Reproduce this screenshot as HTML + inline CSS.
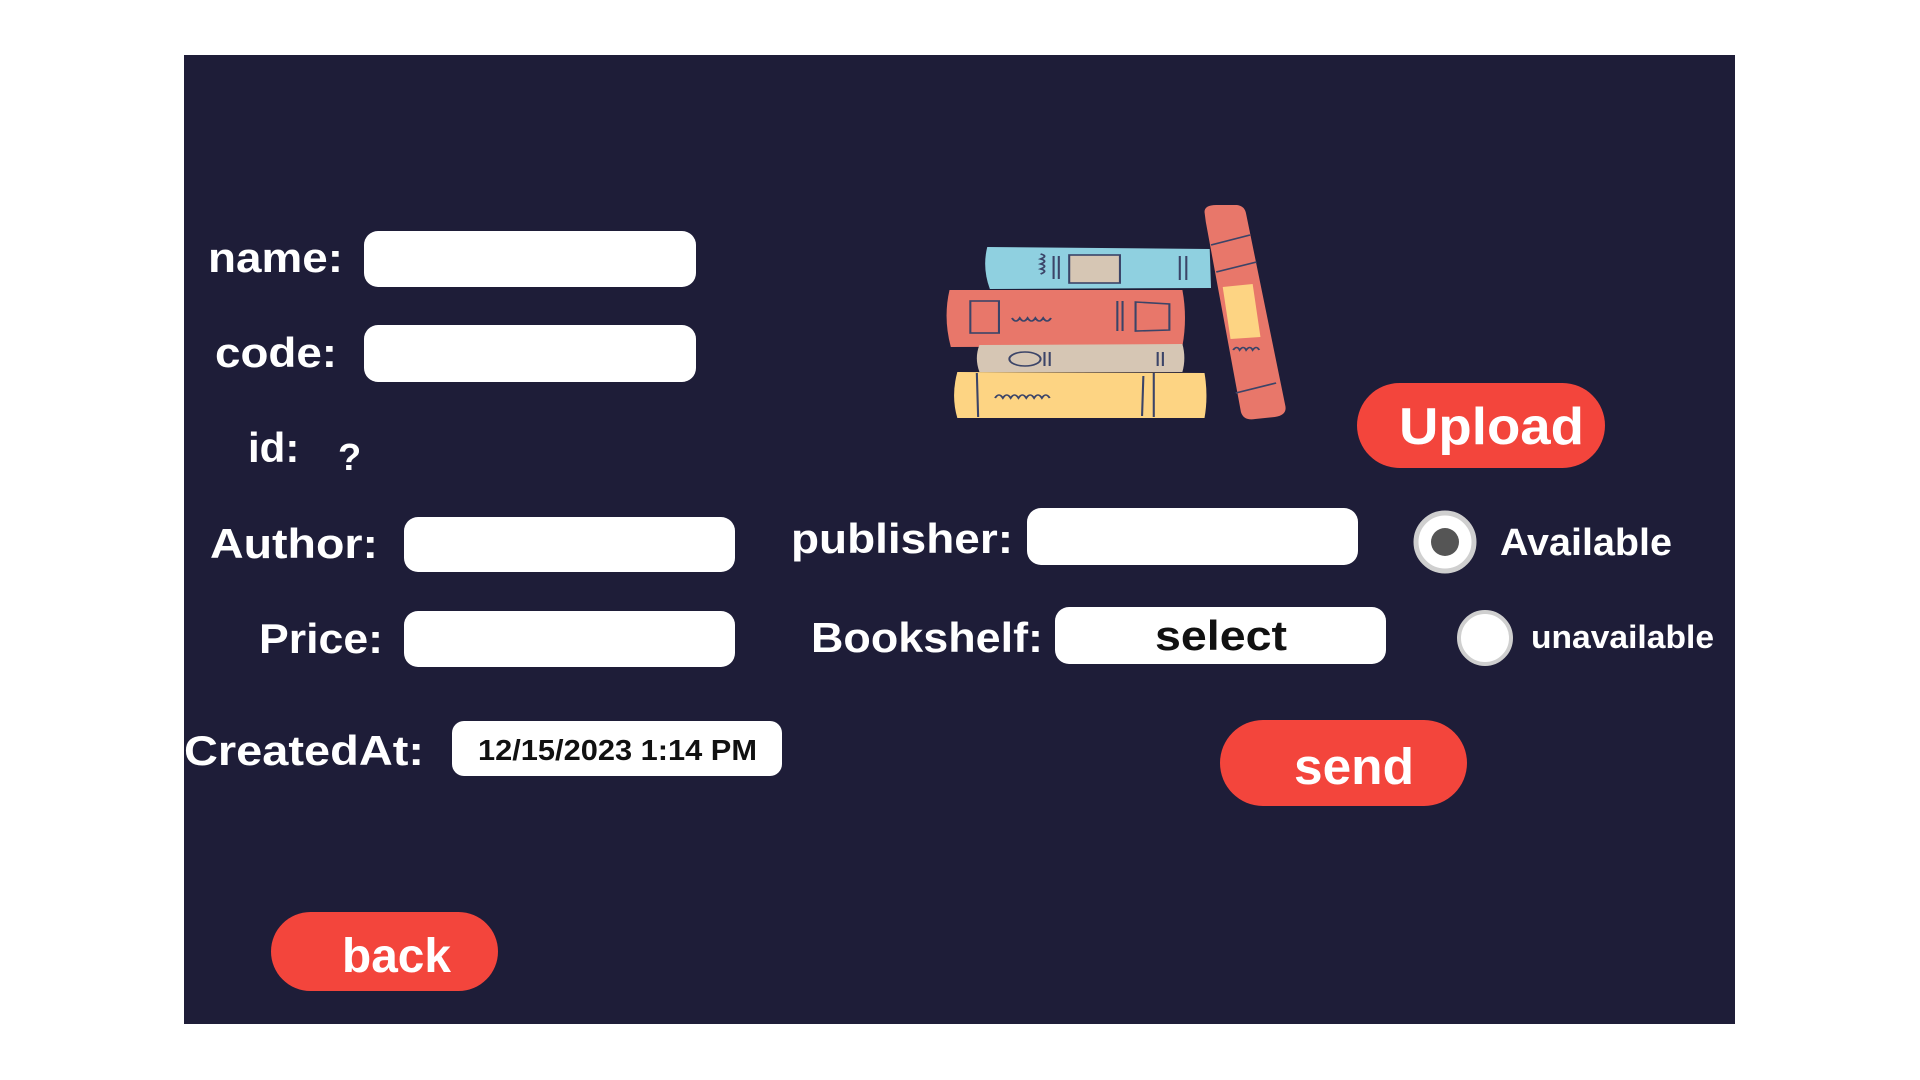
<!DOCTYPE html>
<html><head><meta charset="utf-8"><style>
html,body{margin:0;padding:0;background:#fff;width:1920px;height:1080px;overflow:hidden}
svg{display:block}
text{font-family:"Liberation Sans",sans-serif;font-weight:bold}
</style></head><body>
<svg width="1920" height="1080" viewBox="0 0 1920 1080" xmlns="http://www.w3.org/2000/svg">
<rect x="184" y="55" width="1551" height="969" fill="#1e1d38"/>
<g fill="#fff">
<rect x="364" y="231" width="332" height="56" rx="14"/>
<rect x="364" y="325" width="332" height="57" rx="14"/>
<rect x="404" y="517" width="331" height="55" rx="14"/>
<rect x="404" y="611" width="331" height="56" rx="14"/>
<rect x="452" y="721" width="330" height="55" rx="12"/>
<rect x="1027" y="508" width="331" height="57" rx="14"/>
<rect x="1055" y="607" width="331" height="57" rx="14"/>
</g>
<g fill="#fff" font-size="42">
<text x="208" y="272" textLength="135" lengthAdjust="spacingAndGlyphs">name:</text>
<text x="215" y="367" textLength="122" lengthAdjust="spacingAndGlyphs">code:</text>
<text x="248" y="462">id:</text>
<text x="338" y="470" font-size="38">?</text>
<text x="210" y="558" textLength="168" lengthAdjust="spacingAndGlyphs">Author:</text>
<text x="259" y="653" textLength="124" lengthAdjust="spacingAndGlyphs">Price:</text>
<text x="184" y="765" textLength="240" lengthAdjust="spacingAndGlyphs">CreatedAt:</text>
<text x="791" y="553" textLength="222" lengthAdjust="spacingAndGlyphs">publisher:</text>
<text x="811" y="652" textLength="232" lengthAdjust="spacingAndGlyphs">Bookshelf:</text>
<text x="1500" y="555" font-size="38" textLength="172" lengthAdjust="spacingAndGlyphs">Available</text>
<text x="1531" y="648" font-size="32" textLength="183" lengthAdjust="spacingAndGlyphs">unavailable</text>
</g>
<text x="478" y="760" font-size="29" fill="#111" textLength="279" lengthAdjust="spacingAndGlyphs">12/15/2023 1:14 PM</text>
<text x="1221" y="650" font-size="42" fill="#111" text-anchor="middle" textLength="132" lengthAdjust="spacingAndGlyphs">select</text>
<circle cx="1445" cy="542" r="29" fill="#fff" stroke="#cfcfcf" stroke-width="5"/>
<circle cx="1445" cy="542" r="14" fill="#555"/>
<circle cx="1485" cy="638" r="26" fill="#fff" stroke="#cfcfcf" stroke-width="4"/>
<g fill="#f3453c">
<rect x="1357" y="383" width="248" height="85" rx="42.5"/>
<rect x="1220" y="720" width="247" height="86" rx="43"/>
<rect x="271" y="912" width="227" height="79" rx="39.5"/>
</g>
<g fill="#fff">
<text x="1399" y="444" font-size="52" textLength="185" lengthAdjust="spacingAndGlyphs">Upload</text>
<text x="1294" y="784" font-size="51" textLength="120" lengthAdjust="spacingAndGlyphs">send</text>
<text x="342" y="972" font-size="48" textLength="109" lengthAdjust="spacingAndGlyphs">back</text>
</g>
<g transform="translate(930,0) scale(1.301,1) translate(-930,0)">
<g stroke="#3b4468" stroke-width="1.6" fill="none">
<path d="M974 247 L1145 249 L1146 288 L976 289 Q970 268 974 247Z" fill="#8fd0e0" stroke="none"/>
<rect x="1037" y="255" width="39" height="28" fill="#d6c6b4"/>
<path d="M1025 256 L1025 279 M1029 256 L1029 279 M1122 256 L1122 280 M1127 256 L1127 280"/>
<path d="M1015 254 q6 2 0 5 q6 2 0 5 q6 2 0 5 q6 2 0 5"/>
<path d="M945 290 L1124 290 Q1128 318 1124 346 L946 347 Q940 318 945 290Z" fill="#e8776a" stroke="none"/>
<rect x="961" y="301" width="22" height="32"/>
<path d="M1074 301 L1074 331 M1078 301 L1078 331"/>
<path d="M1088 302 L1114 304 L1114 330 L1088 331Z"/>
<path d="M993 318 q3 6 6 0 q3 6 6 0 q3 6 6 0 q3 6 6 0 q3 6 6 0"/>
<path d="M968 345 L1124 344 Q1127 358 1124 372 L968 372 Q964 358 968 345Z" fill="#d6c6b4" stroke="none"/>
<ellipse cx="1003" cy="359" rx="12" ry="7"/>
<path d="M1018 352 L1018 366 M1022 352 L1022 366 M1105 352 L1105 366 M1109 352 L1109 366"/>
<path d="M951 372 L1141 373 Q1144 396 1141 418 L951 418 Q946 396 951 372Z" fill="#fdd483" stroke="none"/>
<path d="M966 373 L967 417 M1094 376 L1093 416 M1102 373 L1102 417"/>
<path d="M980 398 q3 -6 6 0 q3 -6 6 0 q3 -6 6 0 q3 -6 6 0 q3 -6 6 0 q3 -6 6 0 q3 -6 6 0"/>
<path d="M1141 212 Q1141 205 1150 205 L1166 205 Q1172 206 1173 214 L1203 405 Q1205 415 1195 417 L1180 419 Q1171 421 1169 412 L1142 222 Z" fill="#e8776a" stroke="none"/>
<path d="M1146 245 L1176 235 M1150 272 L1181 262 M1165 393 L1196 383"/>
<path d="M1155 287 L1178 284 L1184 337 L1161 339Z" fill="#fdd483" stroke="none"/>
<path d="M1163 350 q3 -5 5 0 q3 -5 5 0 q3 -5 5 0 q3 -5 5 0"/>
</g>
</g>
</svg>
</body></html>
